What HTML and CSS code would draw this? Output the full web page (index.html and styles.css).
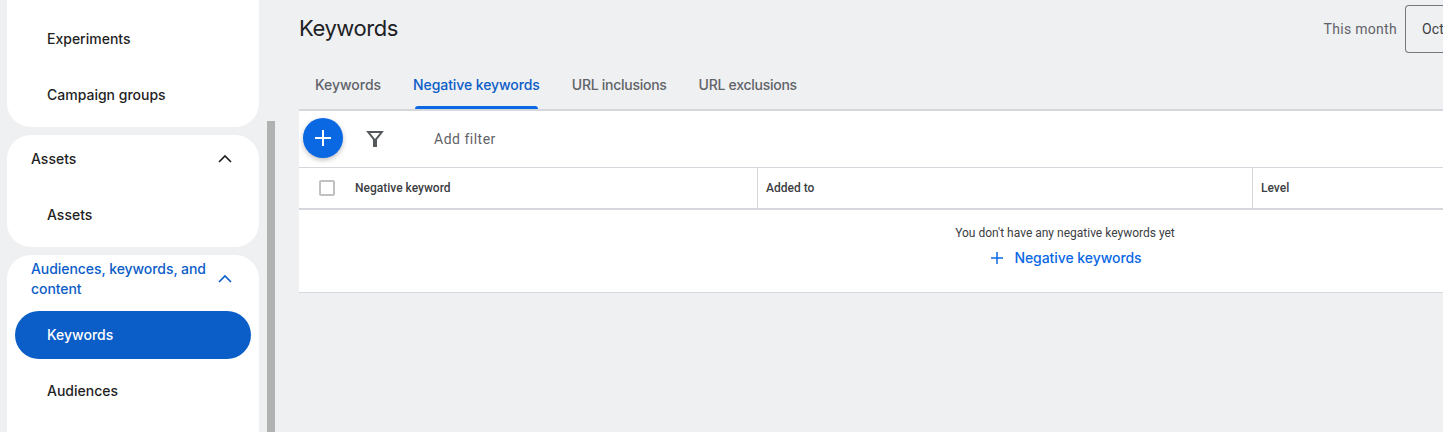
FILE: index.html
```html
<!DOCTYPE html>
<html lang="en">
<head>
<meta charset="utf-8">
<title>Keywords</title>
<link rel="stylesheet" href="styles.css">
</head>
<body>
<div class="app">
  <nav class="sidebar">
    <section class="group group-first">
      <a class="nav-item">Experiments</a>
      <a class="nav-item">Campaign groups</a>
    </section>
    <section class="group">
      <div class="group-head"><span>Assets</span>
        <svg class="chevron" viewBox="0 0 24 24"><path d="M6 15l6-6 6 6"/></svg></div>
      <a class="nav-item">Assets</a>
    </section>
    <section class="group">
      <div class="group-head active"><span>Audiences, keywords, and<br>content</span>
        <svg class="chevron" viewBox="0 0 24 24"><path d="M6 15l6-6 6 6"/></svg></div>
      <a class="nav-item selected">Keywords</a>
      <a class="nav-item">Audiences</a>
      <a class="nav-item"></a>
    </section>
  </nav>
  <div class="scroll-track"><div class="scroll-thumb"></div></div>
  <main class="content">
    <header class="page-head">
      <h1>Keywords</h1>
      <div class="date"><span class="range">This month</span><div class="date-box">Oct</div></div>
    </header>
    <div class="tabs">
      <a class="tab">Keywords</a>
      <a class="tab current">Negative keywords</a>
      <a class="tab tab-url">URL inclusions</a>
      <a class="tab tab-url">URL exclusions</a>
    </div>
    <div class="panel">
      <div class="toolbar">
        <button class="fab"><svg viewBox="0 0 24 24"><path d="M12 4v16M4 12h16"/></svg></button>
        <svg class="filter" viewBox="0 0 18 18"><path d="M2.2 2h13.6L10 9.4V16H8V9.4z"/></svg>
        <span class="add-filter">Add filter</span>
      </div>
      <div class="thead">
        <div class="th th-check"><span class="checkbox"></span></div>
        <div class="th th-keyword">Negative keyword</div>
        <div class="th th-added">Added to</div>
        <div class="th th-level">Level</div>
      </div>
      <div class="empty">
        <p>You don't have any negative keywords yet</p>
        <a class="add-link"><svg viewBox="0 0 14 14"><path d="M7 1v12M1 7h12"/></svg><span>Negative keywords</span></a>
      </div>
    </div>
  </main>
</div>
</body>
</html>
```
FILE: styles.css
```css
* { box-sizing: border-box; }
body { margin: 0; background: #eff0f2; color: #1f1f1f; font: 500 14px/20px Inter, Roboto, sans-serif; overflow: hidden; }
.app { display: flex; height: 432px; overflow: hidden; white-space: nowrap; }

.sidebar { width: 252px; margin-left: 7px; flex: none; display: flex; flex-direction: column; gap: 8px; }
.group { flex: none; background: #fff; border-radius: 24px; padding: 0 8px 8px; }
.group-first { border-radius: 0 0 24px 24px; padding-top: 15px; }
.nav-item { display: flex; align-items: center; height: 48px; margin-bottom: 8px; padding-left: 32px; border-radius: 24px; }
.nav-item:last-child { margin-bottom: 0; }
.selected { background: #0b5dc7; color: #fff; }
.group-head { display: flex; align-items: center; justify-content: space-between; height: 48px; margin-bottom: 8px; padding: 0 14px 0 16px; }
.active { color: #0b5dc7; letter-spacing: -.06px; }
.chevron { width: 24px; height: 24px; fill: none; stroke: currentColor; stroke-width: 1.6; }

.scroll-track { width: 8px; margin-left: 8px; flex: none; padding-top: 121px; }
.scroll-thumb { height: 311px; background: #b0b2b1; }

.content { margin-left: 24px; width: 1144px; flex: none; overflow: hidden; }
.page-head { display: flex; justify-content: space-between; height: 61px; padding-top: 5px; }
h1 { margin: 0; font: 400 22px/46px Inter, Roboto, sans-serif; letter-spacing: -.45px; color: #202124; }
.date { display: flex; gap: 8px; font: 400 14px/48px Roboto, sans-serif; color: #5f6368; }
.range { letter-spacing: .3px; }
.date-box { width: 38px; height: 48px; padding-left: 16px; border: 1px solid #747a80; border-right: 0; border-radius: 4px 0 0 4px; line-height: 46px; color: #3c4043; overflow: hidden; letter-spacing: .2px; }

.tabs { display: flex; gap: 32px; height: 50px; padding-left: 16px; border-bottom: 2px solid #d5d7dc; color: #5f6368; }
.tab { position: relative; line-height: 48px; letter-spacing: -.03px; }
.current { color: #0b5dc7; letter-spacing: -.08px; }
.tab-url { letter-spacing: -.27px; }
.current::after { content: ""; position: absolute; left: 2px; right: 2px; bottom: 0; height: 3px; background: #0b68e3; border-radius: 3px 3px 0 0; }

.panel { height: 182px; background: #fff; border-bottom: 1px solid #d5d7dc; }
.toolbar { display: flex; align-items: center; height: 57px; padding-left: 4px; border-bottom: 1px solid #d5d7dc; }
.fab { width: 40px; height: 40px; padding: 8px; margin-bottom: 2px; border: 0; border-radius: 50%; background: #0b68e3; box-shadow: 0 2px 5px rgba(0,0,0,.26); }
.fab svg { display: block; width: 24px; height: 24px; stroke: #fff; stroke-width: 2; }
.filter { width: 18px; height: 18px; margin-left: 23px; fill: none; stroke: #54585d; stroke-width: 2; }
.add-filter { margin-left: 50px; font: 400 14px/20px Roboto, sans-serif; color: #5f6368; letter-spacing: .5px; }
.thead { display: flex; height: 42px; border-bottom: 2px solid #d5d7dc; font: 500 12px/40px Roboto, sans-serif; color: #3c4043; }
.th-check { width: 56px; display: flex; align-items: center; padding-left: 20px; }
.checkbox { width: 16px; height: 16px; border: 2px solid #c1c1c1; border-radius: 2px; }
.th-keyword { width: 402px; }
.th-added { width: 495px; padding-left: 8px; border-left: 1px solid #d5d7dc; }
.th-level { flex: 1; padding-left: 8px; border-left: 1px solid #d5d7dc; }
.empty { display: flex; flex-direction: column; align-items: center; width: 1532px; padding-top: 13px; }
.empty p { margin: 0; font: 400 12px/20px Roboto, sans-serif; color: #3c4043; }
.add-link { display: flex; align-items: center; gap: 10px; margin: 5px 0 0 2px; color: #0b68e3; letter-spacing: -.06px; }
.add-link svg { width: 14px; height: 14px; stroke: currentColor; stroke-width: 1.5; }
```
